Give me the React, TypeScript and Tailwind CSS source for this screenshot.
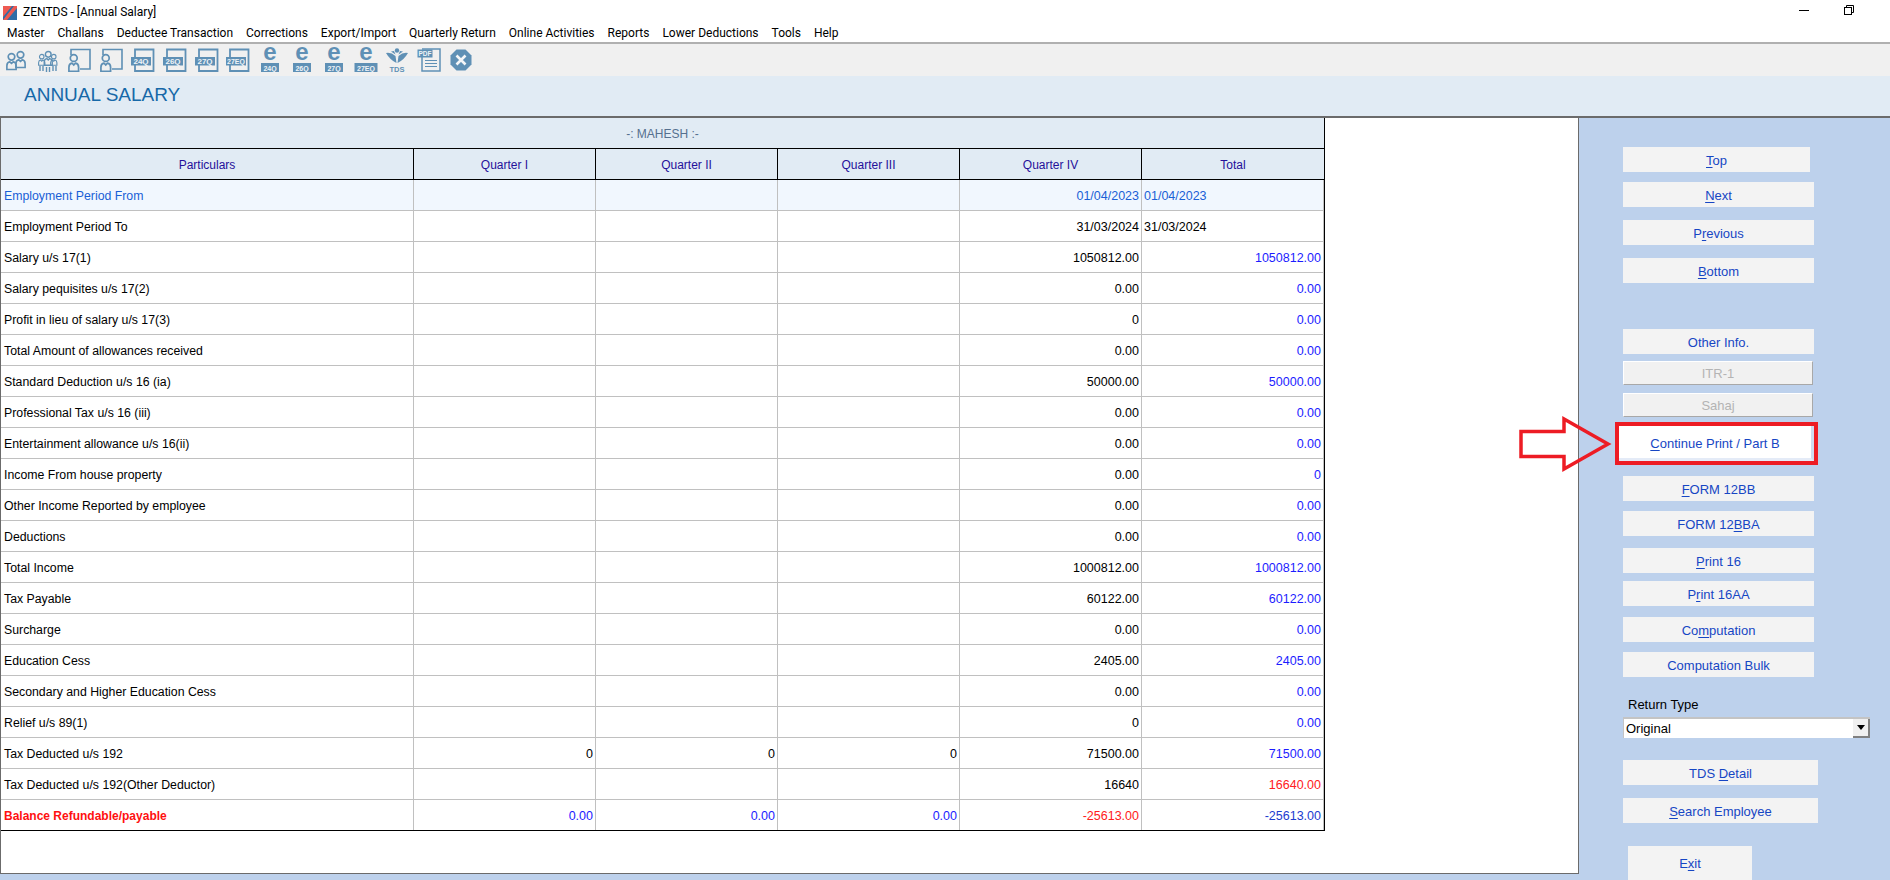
import React from "react";

const C = "#5f90b5";

function Person({ x, y, s = 1 }: { x: number; y: number; s?: number }) {
  return (
    <g transform={`translate(${x} ${y}) scale(${s})`} fill="none" stroke={C} strokeWidth="1.5">
      <circle cx="5" cy="3.5" r="3" />
      <path d="M0.8 15V11.5Q0.8 8.5 3.5 8L5 9.5 6.5 8Q9.2 8.5 9.2 11.5V15Z" />
    </g>
  );
}
function IconPair() {
  return (
    <svg width="24" height="26" viewBox="0 0 24 26">
      <Person x={2} y={6} s={1.1} />
      <Person x={11} y={4} s={1.1} />
    </svg>
  );
}
function IconGroup() {
  return (
    <svg width="24" height="26" viewBox="0 0 24 26">
      <Person x={2} y={7} s={0.75} />
      <Person x={14} y={7} s={0.75} />
      <Person x={7.5} y={4} s={0.95} />
      <path d="M4 19v5M7 19v5M10.5 20v5M13.5 20v5M17 19v5M20 19v5" stroke={C} strokeWidth="1.4" />
    </svg>
  );
}
function IconUserDoc() {
  return (
    <svg width="24" height="26" viewBox="0 0 24 26">
      <path d="M4 8V2.5H23V22H13" fill="none" stroke={C} strokeWidth="1.6" />
      <Person x={1} y={7} s={1.15} />
    </svg>
  );
}
function IconDoc({ t }: { t: string }) {
  return (
    <svg width="26" height="26" viewBox="0 0 26 26">
      <path d="M5 10V2.5H23.5V24H5V18" fill="none" stroke={C} strokeWidth="1.8" />
      <rect x="1" y="10" width="20" height="8.5" fill={C} />
      <text x="11" y="17" textAnchor="middle" fontFamily="Liberation Sans" fontWeight="700" fontSize={t.length > 3 ? "7" : "8"} fill="#eef3f7">{t}</text>
    </svg>
  );
}
function IconE({ t }: { t: string }) {
  const wide = t.length > 3;
  return (
    <svg className="-mt-[12px]" width="24" height="38" viewBox="0 -12 24 38">
      <text x="12" y="12.5" textAnchor="middle" fontFamily="Liberation Sans" fontWeight="700" fontSize="24" fill={C}>e</text>
      <rect x={wide ? 0.5 : 3} y="16" width={wide ? 23 : 18} height="9" fill={C} />
      <text x="12" y="24" textAnchor="middle" fontFamily="Liberation Sans" fontWeight="700" fontSize="7" fill="#eef3f7">{t}</text>
    </svg>
  );
}
function IconTds() {
  return (
    <svg width="24" height="26" viewBox="0 0 24 26">
      <circle cx="12" cy="3.5" r="2.2" fill={C} />
      <path d="M1 6Q6 5 10.5 9L11.5 16Q5 13 1 6Z" fill={C} />
      <path d="M23 6Q18 5 13.5 9L12.5 16Q19 13 23 6Z" fill={C} />
      <path d="M6 4.5L10.5 7.5 9 4ZM18 4.5L13.5 7.5 15 4Z" fill={C} />
      <text x="12" y="25" textAnchor="middle" fontFamily="Liberation Sans" fontWeight="700" fontSize="7.5" fill={C}>TDS</text>
    </svg>
  );
}
function IconPdf() {
  return (
    <svg width="24" height="24" viewBox="0 0 24 24">
      <path d="M5 1H23V23H5V9" fill="none" stroke={C} strokeWidth="1.5" />
      <rect x="0.5" y="1.5" width="15" height="8" fill={C} />
      <text x="8" y="8" textAnchor="middle" fontFamily="Liberation Sans" fontWeight="700" fontSize="6.5" fill="#eef3f7">PDF</text>
      <path d="M8 12.5H20M8 15.5H20M8 18.5H20" stroke={C} strokeWidth="1" />
    </svg>
  );
}
function IconClose() {
  return (
    <svg width="22" height="22" viewBox="0 0 22 22">
      <path d="M6.5 0.5H15.5L21.5 6.5V15.5L15.5 21.5H6.5L0.5 15.5V6.5Z" fill={C} />
      <path d="M6.5 6.5L15.5 15.5M15.5 6.5L6.5 15.5" stroke="#f4f6f8" strokeWidth="2.6" />
    </svg>
  );
}

const menus = ["Master", "Challans", "Deductee Transaction", "Corrections", "Export/Import", "Quarterly Return", "Online Activities", "Reports", "Lower Deductions", "Tools", "Help"];

const toolbar = [
  <IconPair />, <IconGroup />, <IconUserDoc />, <IconUserDoc />,
  <IconDoc t="24Q" />, <IconDoc t="26Q" />, <IconDoc t="27Q" />, <IconDoc t="27EQ" />,
  <IconE t="24Q" />, <IconE t="26Q" />, <IconE t="27Q" />, <IconE t="27EQ" />,
  <IconTds />, <IconPdf />, <IconClose />,
];

type Row = { label: string; q: string[]; q4: string; total: string; totalClass?: string };
const rows: Row[] = [
  { label: "Employment Period To", q: ["", "", ""], q4: "31/03/2024", total: "31/03/2024" },
  { label: "Salary u/s 17(1)", q: ["", "", ""], q4: "1050812.00", total: "1050812.00" },
  { label: "Salary pequisites u/s 17(2)", q: ["", "", ""], q4: "0.00", total: "0.00" },
  { label: "Profit in lieu of salary u/s 17(3)", q: ["", "", ""], q4: "0", total: "0.00" },
  { label: "Total Amount of allowances received", q: ["", "", ""], q4: "0.00", total: "0.00" },
  { label: "Standard Deduction u/s 16 (ia)", q: ["", "", ""], q4: "50000.00", total: "50000.00" },
  { label: "Professional Tax u/s 16 (iii)", q: ["", "", ""], q4: "0.00", total: "0.00" },
  { label: "Entertainment allowance u/s 16(ii)", q: ["", "", ""], q4: "0.00", total: "0.00" },
  { label: "Income From house property", q: ["", "", ""], q4: "0.00", total: "0" },
  { label: "Other Income Reported by employee", q: ["", "", ""], q4: "0.00", total: "0.00" },
  { label: "Deductions", q: ["", "", ""], q4: "0.00", total: "0.00" },
  { label: "Total Income", q: ["", "", ""], q4: "1000812.00", total: "1000812.00" },
  { label: "Tax Payable", q: ["", "", ""], q4: "60122.00", total: "60122.00" },
  { label: "Surcharge", q: ["", "", ""], q4: "0.00", total: "0.00" },
  { label: "Education Cess", q: ["", "", ""], q4: "2405.00", total: "2405.00" },
  { label: "Secondary and Higher Education Cess", q: ["", "", ""], q4: "0.00", total: "0.00" },
  { label: "Relief u/s 89(1)", q: ["", "", ""], q4: "0", total: "0.00" },
  { label: "Tax Deducted u/s 192", q: ["0", "0", "0"], q4: "71500.00", total: "71500.00" },
  { label: "Tax Deducted u/s 192(Other Deductor)", q: ["", "", ""], q4: "16640", total: "16640.00", totalClass: "text-[#ff2020]" },
];

const gridCols = "grid grid-cols-[413px_182px_182px_182px_182px_182px] w-[1323px]";
const cell = "border-r border-[#c0c0c0] flex items-center justify-end pr-[2px] pt-[2px] whitespace-nowrap text-[12.5px]";
const totalCell = "border-r border-[#c0c0c0] flex items-center justify-end pr-[2px] pt-[2px] text-[12.5px]";

type Btn = { pre: string; acc?: string; post?: string; cls: string };
function Accel({ pre, acc, post }: { pre: string; acc?: string; post?: string }) {
  return (
    <span className="whitespace-pre">
      {pre}
      {acc ? <span className="underline underline-offset-2">{acc}</span> : null}
      {post}
    </span>
  );
}
const btnBase = "flex items-center justify-center bg-[#f3f3f3] text-[#1646c4] text-[13px] h-[25px] pt-[2px]";
const upper: Btn[] = [
  { pre: "", acc: "T", post: "op", cls: "mt-[29px] w-[187px]" },
  { pre: "", acc: "N", post: "ext", cls: "mt-[10px] w-[191px]" },
  { pre: "P", acc: "r", post: "evious", cls: "mt-[13px] w-[191px]" },
  { pre: "", acc: "B", post: "ottom", cls: "mt-[13px] w-[191px]" },
  { pre: "Other Info.", cls: "mt-[46px] w-[191px]" },
];
const lower: Btn[] = [
  { pre: "", acc: "F", post: "ORM 12BB", cls: "mt-[11px] w-[191px]" },
  { pre: "FORM 12", acc: "B", post: "BA", cls: "mt-[10px] w-[191px]" },
  { pre: "", acc: "P", post: "rint 16", cls: "mt-[12px] w-[191px]" },
  { pre: "P", acc: "r", post: "int 16AA", cls: "mt-[8px] w-[191px]" },
  { pre: "Co", acc: "m", post: "putation", cls: "mt-[11px] w-[191px]" },
  { pre: "Computation Bulk", cls: "mt-[10px] w-[191px]" },
];

export default function App() {
  return (
    <div className="w-[1890px] h-[880px] overflow-hidden flex flex-col bg-white font-['Liberation_Sans',Arial,sans-serif] text-[13px] text-black">
      {/* Title bar */}
      <div className="h-[22px] flex items-center relative shrink-0 font-['Roboto',sans-serif]">
        <svg className="ml-[3px] mt-[3px]" width="14" height="14" viewBox="0 0 14 14">
          <rect x="0" y="0" width="14" height="14" fill="#2f6da6" />
          <path d="M0 0H9L0 11ZM0 14L11 0H14V2L4 14Z" fill="#ee5a52" />
        </svg>
        <span className="ml-[6px] mt-[2px] text-[12px]">ZENTDS - [Annual Salary]</span>
        <div className="ml-auto flex items-center">
          <div className="w-[10px] h-[1px] bg-black mr-[35px] -mt-[2px]" />
          <svg className="mr-[36px] -mt-[2px]" width="10" height="10" viewBox="0 0 10 10" fill="none" stroke="#000" strokeWidth="1">
            <rect x="0.5" y="2.5" width="7" height="7" />
            <path d="M2.5 2.5V0.5H9.5V7.5H7.5" />
          </svg>
        </div>
      </div>
      {/* Menu */}
      <div className="h-[22px] flex items-center gap-[13px] pl-[7px] pt-[2px] border-b-2 border-b-[#b0b0b0] shrink-0 font-['Roboto',sans-serif] text-[12px]">
        {menus.map((m) => (
          <span key={m} className="whitespace-nowrap">{m}</span>
        ))}
      </div>
      {/* Toolbar */}
      <div className="h-[32px] flex items-center bg-[#f0f0f0] shrink-0">
        {toolbar.map((ic, i) => (
          <div key={i} className="w-[31.8px] flex items-center justify-center">{ic}</div>
        ))}
      </div>
      {/* Page heading */}
      <div className="h-[42px] bg-[#e1ebf4] border-b-2 border-b-[#6b6b6b] flex items-center pl-[24px] pb-[2px] shrink-0">
        <span className="text-[19px] text-[#1668a8]">ANNUAL SALARY</span>
      </div>
      {/* Main */}
      <div className="flex-1 flex bg-[#bdd1ec] relative">
        <div className="w-[1579px] h-[756px] bg-white border-l border-r border-b border-[#6b6b6b] shrink-0">
          <div className="w-[1324px] border-r border-black text-[12.3px]">
            <div className="h-[31px] bg-[#e1ebf4] border-b border-black flex items-center justify-center pt-[1px] text-[12px] text-[#55708f]">
              -: MAHESH :-
            </div>
            <div className={`${gridCols} h-[31px] bg-[#e1ebf4] border-b border-black text-[#25109a] text-[12px]`}>
              {["Particulars", "Quarter I", "Quarter II", "Quarter III", "Quarter IV", "Total"].map((h, i) => (
                <div key={h} className={`flex items-center justify-center pt-[1px] ${i < 5 ? "border-r border-black" : ""}`}>{h}</div>
              ))}
            </div>
            {/* First row */}
            <div className={`${gridCols} h-[31px] bg-[#f1f7fe] border-b border-[#c0c0c0] text-[#1a5fd6]`}>
              <div className="border-r border-[#c0c0c0] flex items-center pl-[3px] pt-[2px]">Employment Period From</div>
              <div className={cell} />
              <div className={cell} />
              <div className={cell} />
              <div className={cell}>01/04/2023</div>
              <div className="border-r border-[#c0c0c0] flex items-center pl-[2px] pt-[2px] text-[12.5px]">01/04/2023</div>
            </div>
            {rows.map((r, idx) => (
              <div key={r.label} className={`${gridCols} h-[31px] border-b border-[#c0c0c0]`}>
                <div className="border-r border-[#c0c0c0] flex items-center pl-[3px] pt-[2px] whitespace-nowrap">{r.label}</div>
                {r.q.map((v, i) => (
                  <div key={i} className={cell}>{v}</div>
                ))}
                <div className={cell}>{r.q4}</div>
                {idx === 0 ? (
                  <div className="border-r border-[#c0c0c0] flex items-center pl-[2px] pt-[2px] text-[12.5px]">{r.total}</div>
                ) : (
                  <div className={`${totalCell} ${r.totalClass ?? "text-[#1c1cff]"}`}>{r.total}</div>
                )}
              </div>
            ))}
            {/* Balance row */}
            <div className={`${gridCols} h-[31px] border-b border-b-black`}>
              <div className="border-r border-[#c0c0c0] flex items-center pl-[3px] pt-[2px] font-bold text-[12px] text-[#ff1010]">Balance Refundable/payable</div>
              <div className={`${cell} text-[#1c1cff]`}>0.00</div>
              <div className={`${cell} text-[#1c1cff]`}>0.00</div>
              <div className={`${cell} text-[#1c1cff]`}>0.00</div>
              <div className={`${cell} text-[#ff2020]`}>-25613.00</div>
              <div className={`${totalCell} text-[#1c3cd0]`}>-25613.00</div>
            </div>
          </div>
        </div>
        {/* Right panel */}
        <div className="flex-1 flex flex-col items-start pl-[44px]">
          {upper.map((b) => (
            <div key={b.pre + b.post} className={`${btnBase} ${b.cls}`}><Accel pre={b.pre} acc={b.acc} post={b.post} /></div>
          ))}
          <div className="mt-[7px] w-[190px] h-[24px] flex items-center justify-center pt-[1px] bg-[#f1f1f1] text-[#b4b4b4] border-t border-l border-white border-r border-r-[#a8a8a8] border-b border-b-[#a8a8a8]">ITR-1</div>
          <div className="mt-[8px] w-[190px] h-[24px] flex items-center justify-center pt-[1px] bg-[#f1f1f1] text-[#b4b4b4] border-t border-l border-white border-r border-r-[#a8a8a8] border-b border-b-[#a8a8a8]">Sahaj</div>
          <div className="mt-[5px] -ml-[8px] w-[203px] h-[43px] border-4 border-[#ed1c24] bg-white">
            <div className="h-full w-full flex items-center justify-center pt-[3px] bg-white border-r-[3px] border-r-[#cfdcf1] border-b-[3px] border-b-[#e4ebf7] text-[#1646c4]">
              <Accel pre="" acc="C" post="ontinue Print / Part B" />
            </div>
          </div>
          {lower.map((b) => (
            <div key={b.pre + b.post} className={`${btnBase} ${b.cls}`}><Accel pre={b.pre} acc={b.acc} post={b.post} /></div>
          ))}
          <div className="mt-[20px] ml-[5px] h-[16px] leading-[16px]">Return Type</div>
          <div className="mt-[4px] w-[247px] h-[21px] bg-white border-t-2 border-l border-[#c4c4c4] flex items-center justify-between">
            <span className="pl-[2px]">Original</span>
            <div className="w-[17px] h-[19px] bg-[#f0f0f0] border-r-2 border-b-2 border-[#808080] flex items-center justify-center">
              <svg width="8" height="5" viewBox="0 0 8 5"><path d="M0 0H8L4 5Z" fill="#000" /></svg>
            </div>
          </div>
          <div className={`${btnBase} mt-[22px] w-[195px]`}><Accel pre="TDS " acc="D" post="etail" /></div>
          <div className={`${btnBase} mt-[13px] w-[195px]`}><Accel pre="" acc="S" post="earch Employee" /></div>
          <div className="mt-[23px] ml-[5px] w-[124px] h-[34px] bg-[#f3f3f3] flex items-start justify-center pt-[8px] text-[#1646c4]"><Accel pre="E" acc="x" post="it" /></div>
        </div>
        {/* Annotation arrow over the panel edge */}
        <svg className="absolute left-[1518px] top-[298px]" width="96" height="57" viewBox="0 0 96 57" fill="none">
          <path d="M3 15.5H46V3L90 28L46 53V40.5H3Z" stroke="#ed1c24" strokeWidth="3.5" />
        </svg>
      </div>
    </div>
  );
}
